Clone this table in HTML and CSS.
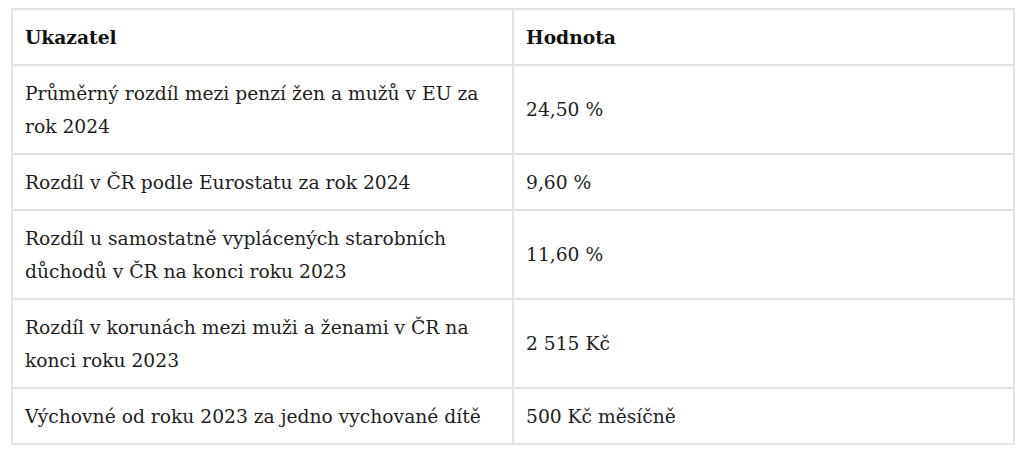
FILE: index.html
```html
<!DOCTYPE html>
<html lang="cs">
<head>
<meta charset="utf-8">
<link rel="stylesheet" href="styles.css">
</head>
<body>
<table class="data">
  <thead>
    <tr><th>Ukazatel</th><th>Hodnota</th></tr>
  </thead>
  <tbody>
    <tr><td>Průměrný rozdíl mezi penzí žen a mužů v EU za rok 2024</td><td>24,50 %</td></tr>
    <tr><td>Rozdíl v ČR podle Eurostatu za rok 2024</td><td>9,60 %</td></tr>
    <tr><td>Rozdíl u samostatně vyplácených starobních důchodů v ČR na konci roku 2023</td><td>11,60 %</td></tr>
    <tr><td>Rozdíl v korunách mezi muži a ženami v ČR na konci roku 2023</td><td>2 515 Kč</td></tr>
    <tr><td>Výchovné od roku 2023 za jedno vychované dítě</td><td>500 Kč měsíčně</td></tr>
  </tbody>
</table>
</body>
</html>
```
FILE: styles.css
```css
html, body {
  margin: 0;
  padding: 0;
  background: #ffffff;
}
body {
  padding: 8px 9px 0 11px;
  font-family: "DejaVu Serif", "Liberation Serif", serif;
  color: #1e1e1e;
}
.data {
  width: 1004px;
  border-collapse: collapse;
  table-layout: fixed;
  border: 2px solid #e4e4e4;
}
.data th, .data td {
  width: 50%;
  border: 2px solid #e4e4e4;
  padding: 10.5px 12px;
  text-align: left;
  vertical-align: middle;
  font-size: 18.7px;
  line-height: 33px;
}
.data th {
  font-weight: bold;
  color: #111111;
}
.data td {
  font-weight: normal;
}
```
